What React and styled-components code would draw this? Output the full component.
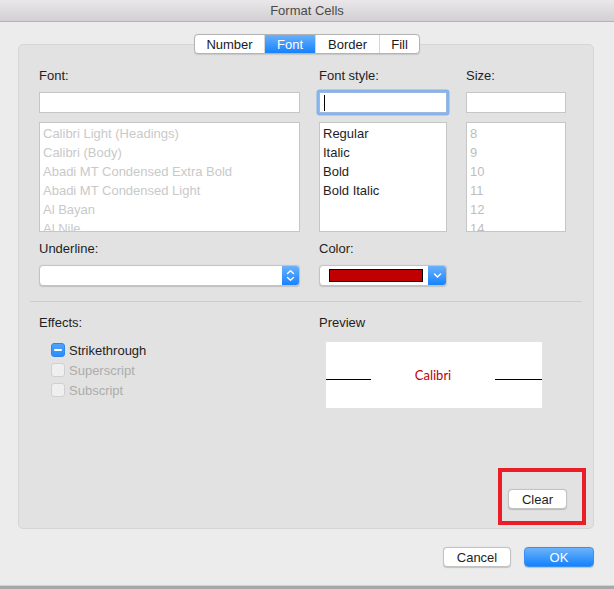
import React from "react";
import styled, { createGlobalStyle } from "styled-components";

const Global = createGlobalStyle`
  html, body { margin: 0; padding: 0; background: #ececec; }
  body { font-family: "Liberation Sans", Arial, sans-serif; font-size: 13px; color: #1e1e1e; }
  * { box-sizing: border-box; }
`;

const Window = styled.div`
  width: 614px;
  height: 589px;
  background: #ececec;
  display: flex;
  flex-direction: column;
  border-bottom: 3px solid #a8a8a8;
  box-shadow: inset 0 -1px 0 #d0d0d0;
  overflow: hidden;
`;

const TitleBar = styled.div`
  height: 22px;
  flex: none;
  background: linear-gradient(#e9e7e9, #d2d0d2);
  border-bottom: 1px solid #b4b2b4;
  display: flex;
  align-items: center;
  justify-content: center;
  color: #4a4a4a;
  font-size: 13px;
`;

const Content = styled.div`
  flex: 1;
  display: flex;
  flex-direction: column;
  padding: 12px 20px 0 18px;
`;

const TabBar = styled.div`
  align-self: center;
  display: flex;
  height: 20px;
  margin-left: 2px;
  margin-bottom: -10px;
  position: relative;
  z-index: 1;
  background: #fff;
  border: 1px solid #b4b4b4;
  border-radius: 4px;
  box-shadow: 0 0.5px 1px rgba(0,0,0,0.12);
  overflow: hidden;
`;

const Tab = styled.div`
  width: ${p => p.$w}px;
  display: flex;
  align-items: center;
  justify-content: center;
  font-size: 13px;
  color: ${p => (p.$active ? "#fff" : "#1a1a1a")};
  background: ${p => (p.$active ? "linear-gradient(#68b0fb, #1682fd)" : "transparent")};
  border-left: ${p => (p.$first ? "none" : "1px solid #d6d6d6")};
`;

const Panel = styled.div`
  height: 485px;
  background: #e2e2e2;
  border: 1px solid #d6d6d6;
  border-radius: 5px;
  padding: 23px 26px 19px 20px;
  display: flex;
  flex-direction: column;
`;

const TopGrid = styled.div`
  display: grid;
  grid-template-columns: 261px 128px 100px;
  column-gap: 19px;
`;

const Field = styled.div`
  display: flex;
  flex-direction: column;
`;

const Label = styled.div`
  height: 16px;
  line-height: 16px;
  font-size: 13px;
  color: #1e1e1e;
  margin-bottom: ${p => p.$mb ?? 8}px;
`;

const TextInput = styled.div`
  height: 21px;
  background: #fff;
  border: 1px solid #c6c6c6;
  position: relative;
  ${p =>
    p.$focus &&
    `
    border-color: #9ab8e0;
    box-shadow: 0 0 0 2.5px #86b3ec;
    border-radius: 1px;
  `}
`;

const Caret = styled.span`
  position: absolute;
  left: 4px;
  top: 2px;
  width: 1px;
  height: 16px;
  background: #000;
`;

const List = styled.div`
  margin-top: 9px;
  height: 110px;
  background: #fff;
  border: 1px solid #c6c6c6;
  padding: 1px 3px;
  overflow: hidden;
`;

const ListItem = styled.div`
  height: 19px;
  line-height: 19px;
  font-size: 13px;
  white-space: nowrap;
  color: ${p => p.$color || "#1e1e1e"};
`;

const SecondRow = styled.div`
  margin-top: 9px;
  display: grid;
  grid-template-columns: 261px 128px;
  column-gap: 19px;
`;

const Select = styled.div`
  height: 21px;
  display: flex;
  background: #fff;
  border-radius: 4px;
  border: 1px solid #c3c3c3;
  box-shadow: 0 0.5px 1px rgba(0,0,0,0.15);
  overflow: hidden;
`;

const SelectBody = styled.div`
  flex: 1;
  display: flex;
  align-items: center;
  padding-left: 9px;
`;

const Swatch = styled.div`
  width: 94px;
  height: 13px;
  background: #c00000;
  border: 1px solid #000;
`;

const SelectButton = styled.div`
  width: ${p => p.$w}px;
  background: linear-gradient(#69b1fb, #1783fd);
  display: flex;
  align-items: center;
  justify-content: center;
`;

const Separator = styled.div`
  height: 1px;
  background: #cdcdcd;
  margin: 15px -15px 0 -9px;
`;

const EffectsRow = styled.div`
  margin-top: 13px;
  display: grid;
  grid-template-columns: 261px 216px;
  column-gap: 19px;
`;

const CheckList = styled.div`
  display: flex;
  flex-direction: column;
  padding-left: 12px;
  margin-top: 9px;
`;

const CheckRow = styled.div`
  height: 20px;
  display: flex;
  align-items: center;
  gap: 4px;
  font-size: 13px;
  color: ${p => (p.$disabled ? "#acacac" : "#1e1e1e")};
`;

const Box = styled.span`
  width: 14px;
  height: 14px;
  border-radius: 3px;
  display: flex;
  align-items: center;
  justify-content: center;
  background: ${p => (p.$on ? "linear-gradient(#4fa3fc, #2a8cfb)" : "#efefef")};
  border: 1px solid ${p => (p.$on ? "#2b86ec" : "#d0d0d0")};
`;

const Dash = styled.span`
  width: 8px;
  height: 2px;
  background: #fff;
  border-radius: 1px;
`;

const PreviewBox = styled.div`
  margin-left: 7px;
  margin-top: 3px;
  width: 216px;
  height: 66px;
  background: #fff;
  display: grid;
  grid-template-columns: 45px 1fr 47px;
  align-items: center;
`;

const PreviewLine = styled.div`
  height: 1px;
  background: #000;
  margin-top: 9px;
`;

const PreviewText = styled.div`
  text-align: center;
  font-family: "Lato", "Open Sans", sans-serif;
  font-size: 13px;
  color: #c00000;
  margin-top: -1px;
`;

const Spacer = styled.div`
  flex: 1;
`;

const ClearRow = styled.div`
  display: flex;
  justify-content: flex-end;
`;

const Highlight = styled.div`
  position: relative;
  display: flex;
`;

const HighlightFrame = styled.div`
  position: absolute;
  left: -10px;
  right: -19px;
  top: -21px;
  bottom: -16px;
  border: 4px solid #e91e27;
  pointer-events: none;
`;

const Button = styled.button`
  height: 20px;
  width: ${p => p.$w}px;
  font-family: inherit;
  font-size: 13px;
  padding: 0;
  border-radius: 4px;
  border: 1px solid ${p => (p.$primary ? "#3a8ff5" : "#c2c2c2")};
  color: ${p => (p.$primary ? "#fff" : "#1e1e1e")};
  background: ${p => (p.$primary ? "linear-gradient(#6cb3fa, #1582fd)" : "#fff")};
  box-shadow: 0 0.5px 1px rgba(0,0,0,0.18);
`;

const Footer = styled.div`
  display: flex;
  justify-content: flex-end;
  gap: 13px;
  margin-top: 18px;
`;

const UpDown = () => (
  <svg width="9" height="13" viewBox="0 0 9 13" fill="none" stroke="#fff" strokeWidth="1.4" strokeLinecap="round" strokeLinejoin="round">
    <path d="M1.5 4.5 L4.5 1.8 L7.5 4.5" />
    <path d="M1.5 8.5 L4.5 11.2 L7.5 8.5" />
  </svg>
);

const Down = () => (
  <svg width="9" height="7" viewBox="0 0 9 7" fill="none" stroke="#fff" strokeWidth="1.5" strokeLinecap="round" strokeLinejoin="round">
    <path d="M1.5 2 L4.5 5 L7.5 2" />
  </svg>
);

const fonts = [
  "Calibri Light (Headings)",
  "Calibri (Body)",
  "Abadi MT Condensed Extra Bold",
  "Abadi MT Condensed Light",
  "Al Bayan",
  "Al Nile",
];
const styles = ["Regular", "Italic", "Bold", "Bold Italic"];
const sizes = ["8", "9", "10", "11", "12", "14"];
const tabs = [
  { t: "Number", w: 69 },
  { t: "Font", w: 51, active: true },
  { t: "Border", w: 64 },
  { t: "Fill", w: 40 },
];

export default function App() {
  return (
    <>
      <Global />
      <Window>
        <TitleBar>Format Cells</TitleBar>
        <Content>
          <TabBar>
            {tabs.map((tb, i) => (
              <Tab key={tb.t} $w={tb.w} $active={tb.active} $first={i === 0}>
                {tb.t}
              </Tab>
            ))}
          </TabBar>
          <Panel>
            <TopGrid>
              <Field>
                <Label>Font:</Label>
                <TextInput />
                <List>
                  {fonts.map(f => (
                    <ListItem key={f} $color="#c9c9c9">{f}</ListItem>
                  ))}
                </List>
              </Field>
              <Field>
                <Label>Font style:</Label>
                <TextInput $focus>
                  <Caret />
                </TextInput>
                <List>
                  {styles.map(f => (
                    <ListItem key={f}>{f}</ListItem>
                  ))}
                </List>
              </Field>
              <Field>
                <Label>Size:</Label>
                <TextInput />
                <List>
                  {sizes.map(f => (
                    <ListItem key={f} $color="#bdbdbd">{f}</ListItem>
                  ))}
                </List>
              </Field>
            </TopGrid>
            <SecondRow>
              <Field>
                <Label>Underline:</Label>
                <Select>
                  <SelectBody />
                  <SelectButton $w={17}>
                    <UpDown />
                  </SelectButton>
                </Select>
              </Field>
              <Field>
                <Label>Color:</Label>
                <Select>
                  <SelectBody>
                    <Swatch />
                  </SelectBody>
                  <SelectButton $w={18}>
                    <Down />
                  </SelectButton>
                </Select>
              </Field>
            </SecondRow>
            <Separator />
            <EffectsRow>
              <Field>
                <Label $mb={0}>Effects:</Label>
                <CheckList>
                  <CheckRow>
                    <Box $on>
                      <Dash />
                    </Box>
                    Strikethrough
                  </CheckRow>
                  <CheckRow $disabled>
                    <Box />
                    Superscript
                  </CheckRow>
                  <CheckRow $disabled>
                    <Box />
                    Subscript
                  </CheckRow>
                </CheckList>
              </Field>
              <Field>
                <Label $mb={8}>Preview</Label>
                <PreviewBox>
                  <PreviewLine />
                  <PreviewText>Calibri</PreviewText>
                  <PreviewLine />
                </PreviewBox>
              </Field>
            </EffectsRow>
            <Spacer />
            <ClearRow>
              <Highlight>
                <Button $w={59}>Clear</Button>
                <HighlightFrame />
              </Highlight>
            </ClearRow>
          </Panel>
          <Footer>
            <Button $w={68}>Cancel</Button>
            <Button $w={70} $primary>OK</Button>
          </Footer>
        </Content>
      </Window>
    </>
  );
}
